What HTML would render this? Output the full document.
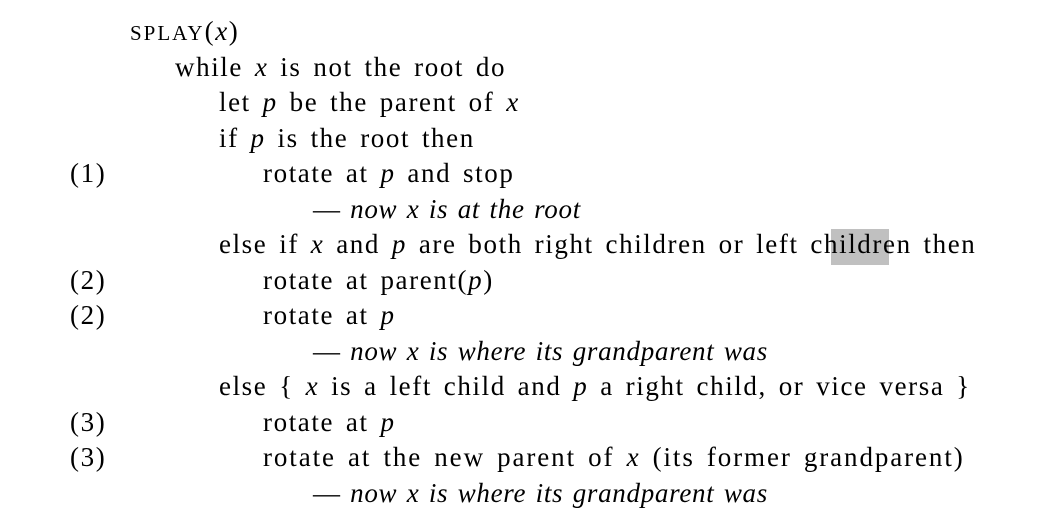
<!DOCTYPE html>
<html><head><meta charset="utf-8"><style>
body{margin:0;width:1054px;height:528px;background:#fff;overflow:hidden;position:relative;font-family:"Liberation Serif",serif;font-size:27px;color:#000}
.l{position:absolute;line-height:26px;white-space:nowrap;letter-spacing:1.6px;word-spacing:3.5px}
.c{letter-spacing:0.7px;word-spacing:2px}
i{font-style:italic}
.sc{font-size:21px;letter-spacing:2px}
.hl{background:#c0c0c0;position:absolute;left:831px;top:229px;width:58px;height:36px}
</style></head><body>
<div class="hl"></div>
<div class="l" style="left:130px;top:18px"><span class="sc">SPLAY</span>(<i>x</i>)</div>
<div class="l" style="left:175px;top:54px">while <i>x</i> is not the root do</div>
<div class="l" style="left:219px;top:89px">let <i>p</i> be the parent of <i>x</i></div>
<div class="l" style="left:219px;top:125px">if <i>p</i> is the root then</div>
<div class="l" style="left:70px;top:160px">(1)</div>
<div class="l" style="left:263px;top:160px">rotate at <i>p</i> and stop</div>
<div class="l c" style="left:313px;top:196px">— <i>now x is at the root</i></div>
<div class="l" style="left:219px;top:231px">else if <i>x</i> and <i>p</i> are both right children or left children then</div>
<div class="l" style="left:70px;top:267px">(2)</div>
<div class="l" style="left:263px;top:267px">rotate at parent(<i>p</i>)</div>
<div class="l" style="left:70px;top:302px">(2)</div>
<div class="l" style="left:263px;top:302px">rotate at <i>p</i></div>
<div class="l c" style="left:313px;top:338px">— <i>now x is where its grandparent was</i></div>
<div class="l" style="left:219px;top:373px">else { <i>x</i> is a left child and <i>p</i> a right child, or vice versa }</div>
<div class="l" style="left:70px;top:409px">(3)</div>
<div class="l" style="left:263px;top:409px">rotate at <i>p</i></div>
<div class="l" style="left:70px;top:444px">(3)</div>
<div class="l" style="left:263px;top:444px;letter-spacing:1.9px">rotate at the new parent of <i>x</i> (its former grandparent)</div>
<div class="l c" style="left:313px;top:480px">— <i>now x is where its grandparent was</i></div>
</body></html>
